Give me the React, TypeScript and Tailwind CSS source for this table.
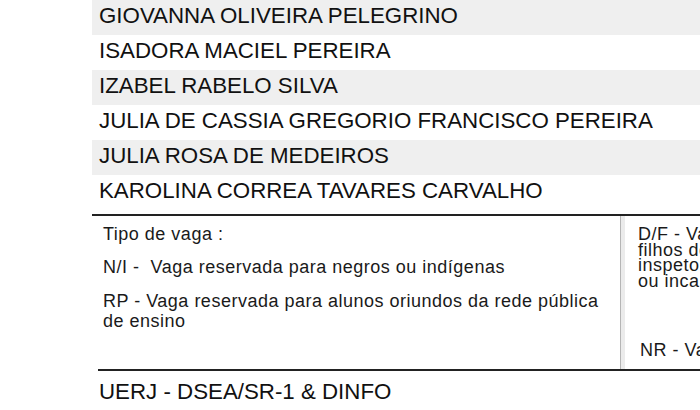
import React from 'react';

const nomes = [
  'GIOVANNA OLIVEIRA PELEGRINO',
  'ISADORA MACIEL PEREIRA',
  'IZABEL RABELO SILVA',
  'JULIA DE CASSIA GREGORIO FRANCISCO PEREIRA',
  'JULIA ROSA DE MEDEIROS',
  'KAROLINA CORREA TAVARES CARVALHO',
];

const df = [
  'D/F - Vaga reservada para pessoas com deficiência e',
  'filhos de policiais civis e militares, bombeiros militares e',
  'inspetores de segurança e administração penitenciária, mortos',
  'ou incapacitados em razão do serviço',
];

export default function App() {
  return (
    <div className="w-[700px] h-[410px] overflow-hidden bg-white text-[#111] font-['Liberation_Sans',Arial,sans-serif]">
      <div className="ml-[92px] w-[608px]">
        {/* Lista de nomes */}
        <div className="flex flex-col">
          {nomes.map((nome, i) => (
            <div
              key={nome}
              className={`h-[35px] pl-[7px] text-[22.3px] leading-[31px] whitespace-nowrap ${
                i % 2 === 0 ? 'bg-[#efefef]' : 'bg-white'
              }`}
            >
              {nome}
            </div>
          ))}
        </div>

        {/* Legenda */}
        <div className="mt-[4px] flex h-[155px] border-t-2 border-[#222]">
          <div className="w-[528px] shrink-0 pl-[11px] pt-[8px] text-[18px] leading-[20px] tracking-[0.5px] text-[#1a1a1a]">
            <p>Tipo de vaga :</p>
            <p className="mt-[13px] whitespace-pre">N/I -  Vaga reservada para negros ou indígenas</p>
            <p className="mt-[14px]">
              RP - Vaga reservada para alunos oriundos da rede pública
              <br />
              de ensino
            </p>
          </div>
          <div className="flex shrink-0">
            <div className="w-px bg-[#b5b5b5]" />
            <div className="w-[4px] bg-[#ebebeb]" />
          </div>
          <div className="min-w-0 flex-1 overflow-hidden pl-[13px] pt-[11px] text-[18px] tracking-[0.5px] text-[#1a1a1a] whitespace-nowrap">
            <div className="leading-[15.5px]">
              {df.map((l) => (
                <div key={l}>{l}</div>
              ))}
            </div>
            <p className="mt-[51px] pl-[2px] leading-[20px]">NR - Vaga não reservada</p>
          </div>
        </div>

        {/* Rodapé */}
        <div className="ml-[6px] border-t-2 border-[#222] pl-[1px] pt-[8px] text-[22.3px] leading-[26px]">
          UERJ - DSEA/SR-1 &amp; DINFO
        </div>
      </div>
    </div>
  );
}
